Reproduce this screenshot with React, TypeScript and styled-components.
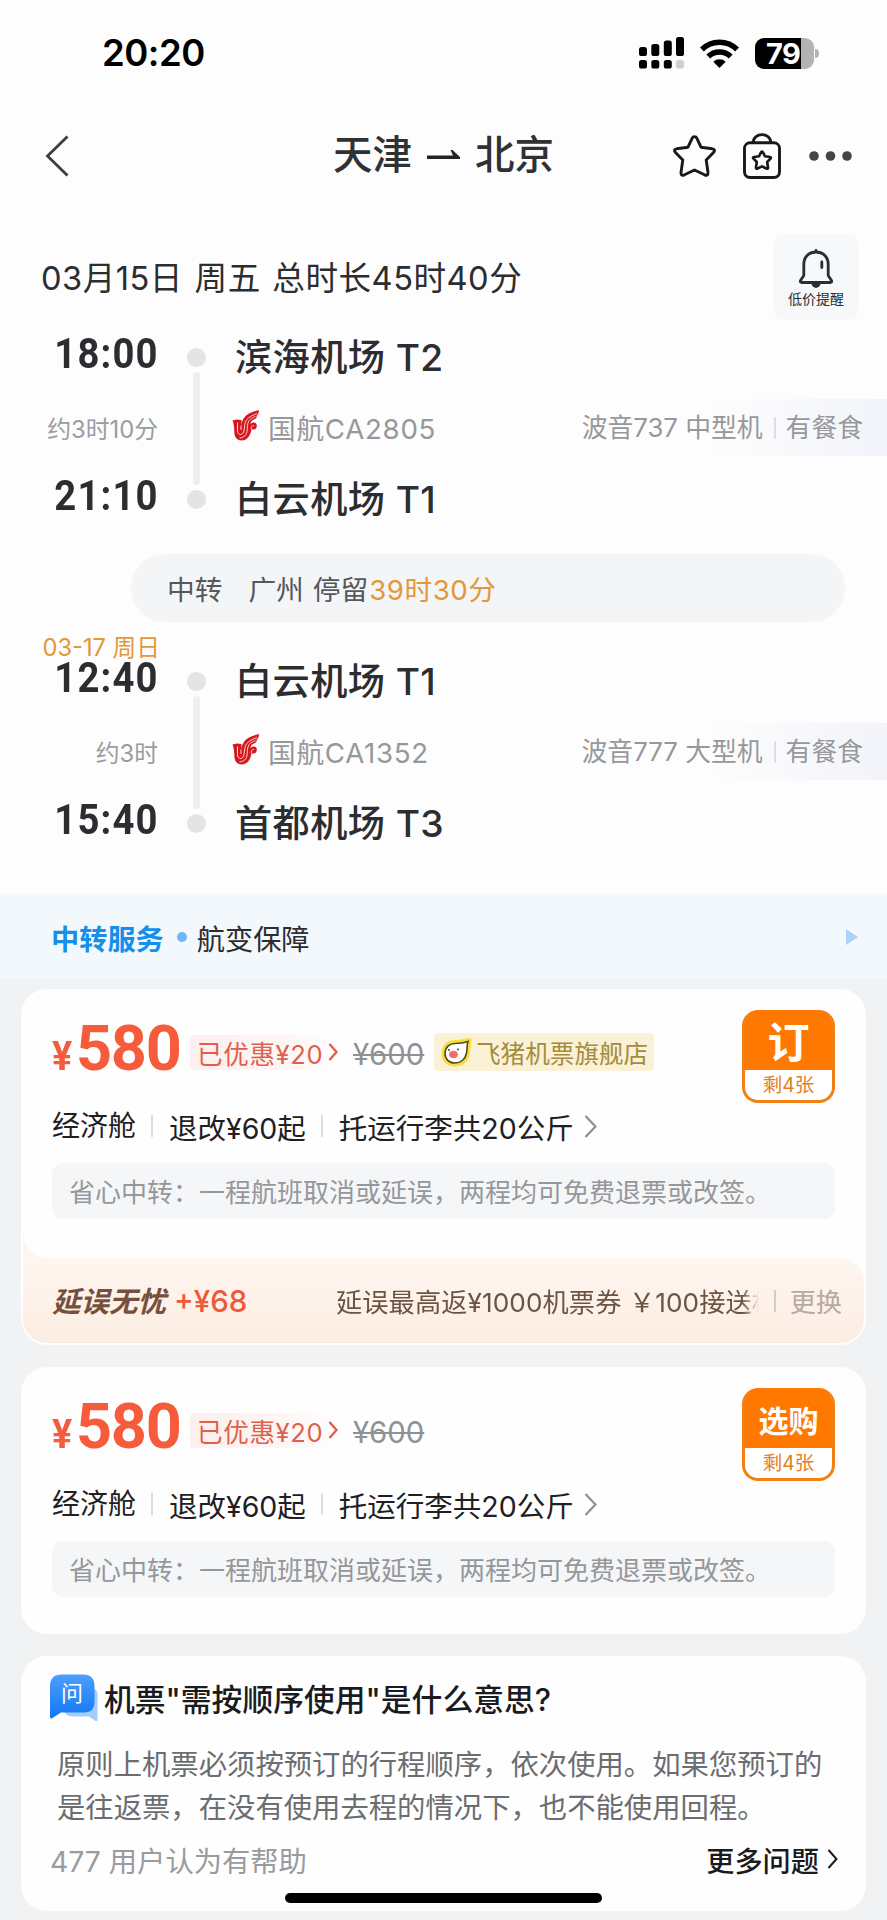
import React from 'react';
import styled, { createGlobalStyle } from 'styled-components';

const Global = createGlobalStyle`
  * { box-sizing: border-box; }
  body { margin: 0; background: #f0f2f4; }
`;

const Page = styled.div`
  position: relative;
  width: 887px;
  height: 1920px;
  overflow: hidden;
  background: #f0f2f4;
  font-family: Inter, 'Noto Sans CJK SC', sans-serif;
  color: #2b2d30;
  white-space: nowrap;
`;

const Sheet = styled.section`
  height: 894px;
  background: #fdfdfd;
`;

/* status bar */
const StatusBar = styled.div`
  height: 106px;
  padding: 0 68px 0 102px;
  display: flex;
  align-items: center;
  justify-content: space-between;
`;
const Clock = styled.span`
  font-size: 36.5px;
  font-weight: 600;
  letter-spacing: -0.5px;
  color: #000;
`;
const StatusIcons = styled.div`
  display: flex;
  align-items: center;
  gap: 16px;
`;

/* navigation */
const NavBar = styled.header`
  height: 98px;
  padding: 2px 35px 0 45px;
  display: grid;
  grid-template-columns: 1fr auto 1fr;
  align-items: center;
`;
const Title = styled.h1`
  margin: -2px 0 0 -10px;
  display: flex;
  align-items: center;
  gap: 15px;
  font-size: 39.5px;
  font-weight: 500;
  line-height: 50px;
  color: #303133;
`;
const NavActions = styled.div`
  margin-top: -1px;
  display: flex;
  justify-content: flex-end;
  align-items: center;
`;

/* itinerary */
const DateRow = styled.div`
  height: 85px;
  margin: 31px 28px 2px 41px;
  display: flex;
  align-items: center;
  justify-content: space-between;
`;
const DateText = styled.span`
  margin-top: -5px;
  font-size: 32.6px;
  letter-spacing: 0.5px;
  word-spacing: 2px;
`;
const AlertButton = styled.button`
  width: 86px;
  height: 85px;
  padding: 13px 0 0;
  border: 0;
  border-radius: 12px;
  background: #f6f8f9;
  display: flex;
  flex-direction: column;
  align-items: center;
  font: 14px/18px Inter, 'Noto Sans CJK SC', sans-serif;
  color: #2b2d30;
  white-space: nowrap;
`;
const Leg = styled.div`
  display: grid;
  grid-template-columns: 158px 76px 1fr;
  grid-template-rows: repeat(3, 71px);
`;
const TimeCell = styled.div<{ $row: number }>`
  grid-column: 1;
  grid-row: ${(p) => p.$row};
  display: flex;
  flex-direction: column;
  justify-content: flex-end;
  align-items: flex-end;
  padding-bottom: 20px;
`;
const Time = styled.span`
  margin-right: -1px;
  font-family: Roboto, sans-serif;
  font-weight: 700;
  font-size: 42px;
  line-height: 38px;
  letter-spacing: 1.3px;
  transform: scaleX(0.91);
  transform-origin: right;
`;
const DayLabel = styled.span`
  font-size: 23.7px;
  line-height: 24px;
  margin: 0 -2px -1px 0;
  color: #e2983a;
`;
const Duration = styled.div`
  grid-column: 1;
  grid-row: 2;
  align-self: center;
  justify-self: end;
  margin-top: -2px;
  font-size: 23.8px;
  color: #9a9c9f;
`;
const Track = styled.div`
  grid-column: 2;
  grid-row: 1 / span 3;
  padding: 26px 0;
  display: flex;
  flex-direction: column;
  align-items: center;
  gap: 5px;
`;
const Stop = styled.i`
  width: 19px;
  height: 19px;
  border-radius: 50%;
  background: #e2e4e5;
`;
const Rail = styled.i`
  flex: 1;
  width: 7px;
  border-radius: 3px;
  background: #eeeff0;
`;
const Airport = styled.div<{ $row: number }>`
  grid-column: 3;
  grid-row: ${(p) => p.$row};
  padding-left: 1px;
  line-height: 71px;
  font-size: 37.2px;
  font-weight: 500;
  letter-spacing: 0.4px;
`;
const FlightRow = styled.div`
  grid-column: 3;
  grid-row: 2;
  display: flex;
  align-items: center;
  justify-content: space-between;
  color: #96989b;
`;
const Flight = styled.div`
  margin: -3px 0 0 -2px;
  display: flex;
  align-items: center;
  gap: 8px;
  font-size: 27.7px;
  letter-spacing: 0.7px;
`;
const Aircraft = styled.div`
  height: 57px;
  width: 330px;
  padding: 2px 24px 0 0;
  margin-top: -3px;
  display: flex;
  align-items: center;
  justify-content: flex-end;
  font-size: 25.8px;
  line-height: 30px;
  background: linear-gradient(90deg, rgba(243, 245, 250, 0) 45%, #f2f4fa);
`;
const Bar = styled.i<{ $h?: number; $m?: string; $c?: string }>`
  width: 2px;
  height: ${(p) => p.$h ?? 22}px;
  margin: ${(p) => p.$m ?? '0 10px 0 11px'};
  background: ${(p) => p.$c ?? '#dcdee0'};
`;
const Transfer = styled.div`
  height: 68px;
  margin: 19px 42px 24px 131px;
  padding-left: 36px;
  border-radius: 34px;
  background: #f3f5f7;
  display: flex;
  align-items: center;
  font-size: 27.7px;
  color: #55585c;
`;
const TransferCity = styled.span`
  margin: 0 9px 0 26px;
`;
const Wait = styled.span`
  margin-left: 1px;
  letter-spacing: 0.5px;
  color: #e2983a;
`;

/* service band */
const Service = styled.div`
  height: 85px;
  padding: 1px 29px 0 51px;
  display: flex;
  align-items: center;
  font-size: 28.2px;
  background: #f3f8fc;
`;
const ServiceName = styled.b`
  font-weight: 600;
  color: #168fe8;
`;
const Dot = styled.i`
  width: 10px;
  height: 10px;
  margin: 0 10px 0 13px;
  border-radius: 50%;
  background: #74b4f5;
`;
const Arrow = styled.i`
  margin-left: auto;
  border: solid transparent;
  border-width: 8px 0 8px 12px;
  border-left-color: #abd2f8;
`;

/* cards */
const Cards = styled.main`
  padding: 10px 21px;
  display: flex;
  flex-direction: column;
  gap: 22px;
`;
const Card = styled.article<{ $h: number }>`
  height: ${(p) => p.$h}px;
  border-radius: 26px;
  background: #fefefe;
  overflow: hidden;
`;
const OfferBody = styled.div`
  height: 269px;
  padding: 21px 31px 0;
`;
const OfferHead = styled.div`
  height: 153px;
  display: flex;
  justify-content: space-between;
`;
const PriceRow = styled.div`
  height: 84px;
  display: flex;
  align-items: center;
`;
const Price = styled.div`
  width: 138px;
  margin-top: 1px;
  display: flex;
  align-items: baseline;
  font-family: Roboto, sans-serif;
  font-weight: 700;
  line-height: 66px;
  color: #f65b3b;
`;
const Yen = styled.span`
  width: 24px;
  font-size: 41px;
  transform: scaleX(0.92);
  transform-origin: left;
`;
const Amount = styled.span`
  font-size: 63px;
  letter-spacing: -1.3px;
`;
const Discount = styled.div`
  width: 150px;
  height: 35px;
  padding-left: 7px;
  display: flex;
  align-items: center;
  gap: 5px;
  border-radius: 4px;
  font-size: 25.6px;
  letter-spacing: 0.6px;
  color: #e0604c;
  background: linear-gradient(90deg, #fdefed, #fef7f6 70%, #fefefe);
`;
const OldPrice = styled.s`
  width: 81px;
  margin: 5px 0 0 13px;
  font-size: 29.3px;
  color: #8f9194;
`;
const Store = styled.div`
  height: 38px;
  width: 220px;
  padding-left: 7px;
  display: flex;
  align-items: center;
  gap: 4px;
  border-radius: 4px;
  font-size: 24.6px;
  color: #a38d3d;
  background: #fbf1d6;
`;
const CabinRow = styled.div`
  height: 64px;
  display: flex;
  align-items: center;
  font-size: 28px;
  color: #1e2023;
`;
const Cabin = styled.span`
  margin-top: -5px;
`;
const Terms = styled.span`
  font-size: 28.5px;
`;
const BuyButton = styled.button<{ $size: number }>`
  width: 93px;
  height: 93px;
  padding: 0;
  border: 3px solid #f47f12;
  border-top-color: #ff7800;
  border-radius: 16px;
  background: linear-gradient(#ff7800 57px, #fff 57px);
  text-align: center;
  color: #e2801f;
  font: 19.5px/29px Inter, 'Noto Sans CJK SC', sans-serif;

  b {
    display: block;
    height: 57px;
    color: #fff;
    font-weight: 600;
    font-size: ${(p) => p.$size}px;
    line-height: 58px;
  }
`;
const Note = styled.p`
  height: 56px;
  margin: 0;
  padding-left: 17px;
  border-radius: 11px;
  background: #f4f6f8;
  color: #95979a;
  font-size: 26px;
  line-height: 59px;
`;
const Insurance = styled.div`
  position: relative;
  height: 85px;
  margin: 0 2px;
  padding: 0 22px 0 29px;
  border-radius: 0 24px 24px 24px;
  display: flex;
  align-items: center;
  background: linear-gradient(#fff6f0, #fcede2);
  font-size: 26.2px;
  color: #6b5443;

  &::before {
    content: '';
    position: absolute;
    left: 0;
    top: -24px;
    width: 24px;
    height: 24px;
    background: radial-gradient(circle at 100% 0, transparent 23px, #fff6f0 24px);
  }
`;
const InsuranceName = styled.b`
  margin-top: -3px;
  font-weight: 700;
  font-style: italic;
  font-size: 28.5px;
  color: #77503d;
`;
const InsurancePrice = styled.span`
  width: 162px;
  margin: 1px 0 0 8px;
  font-size: 29.5px;
  font-weight: 500;
  color: #f0583c;
`;
const Benefit = styled.span`
  width: 423px;
  overflow: hidden;
  letter-spacing: 0.1px;
  mask-image: linear-gradient(90deg, #000 96%, transparent);
`;
const Change = styled.span`
  margin-left: auto;
  color: #b6aaa1;
`;

/* question card */
const Faq = styled.div`
  padding: 16px 28px 0 29px;
`;
const FaqHead = styled.h2`
  margin: 0;
  height: 50px;
  display: flex;
  align-items: center;
  gap: 6px;
  font-size: 30.8px;
  font-weight: 500;
  color: #191b1e;
`;
const Answer = styled.p`
  margin: 22px 0 0 7px;
  font-size: 28.35px;
  line-height: 43px;
  color: #6b6d70;
`;
const FaqFoot = styled.div`
  height: 50px;
  margin-top: 4px;
  display: flex;
  align-items: center;
  justify-content: space-between;
  font-size: 28.3px;
  color: #999b9e;
`;
const More = styled.span`
  display: flex;
  align-items: center;
  gap: 8px;
  font-size: 28.2px;
  font-weight: 500;
  color: #191b1e;
`;
const HomeIndicator = styled.div`
  position: absolute;
  left: 285px;
  bottom: 17px;
  width: 317px;
  height: 10px;
  border-radius: 5px;
  background: #000;
`;

const Chevron = ({ w, h, color, sw = 2 }: { w: number; h: number; color: string; sw?: number }) => (
  <svg width={w} height={h} viewBox={`0 0 ${w} ${h}`} fill="none" stroke={color} strokeWidth={sw}>
    <path d={`M1.5 1L${w - 1.5} ${h / 2}L1.5 ${h - 1}`} />
  </svg>
);

const Signal = () => (
  <svg width="45" height="32" viewBox="0 0 45 32">
    <rect x="0" y="10" width="8" height="9" rx="2.6" />
    <rect x="12.3" y="7" width="8" height="12" rx="2.6" />
    <rect x="24.8" y="3.5" width="8" height="15.5" rx="2.6" />
    <rect x="37" y="0" width="8" height="19" rx="2.6" />
    <rect x="0" y="23" width="8" height="8.5" rx="2.6" />
    <rect x="12.3" y="23" width="8" height="8.5" rx="2.6" />
    <rect x="24.8" y="23" width="8" height="8.5" rx="2.6" />
    <rect x="37" y="23" width="8" height="8.5" rx="2.6" fill="#d0d0d0" />
  </svg>
);

const Wifi = () => (
  <svg width="39" height="29" viewBox="0 0 39 29" fill="none" stroke="#000" strokeWidth="5.6">
    <path d="M1.9 10.5a25 25 0 0 1 35.2 0" />
    <path d="M8.3 17.6a16 16 0 0 1 22.4 0" />
    <path d="M19.5 29L13.3 22.8a9 9 0 0 1 12.4 0z" fill="#000" stroke="none" />
  </svg>
);

const BatteryBox = styled.div`
  display: flex;
  align-items: center;
  gap: 1px;
`;
const BatteryLevel = styled.div`
  width: 59px;
  height: 31px;
  border-radius: 9px;
  padding-left: 11px;
  background: linear-gradient(90deg, #000 46px, #b3b3b3 46px);
  color: #fff;
  font-size: 29px;
  font-weight: 700;
  line-height: 31px;
  letter-spacing: -0.6px;
`;
const BatteryCap = styled.i`
  width: 4px;
  height: 9px;
  border-radius: 0 5px 5px 0;
  background: #b3b3b3;
`;

const STAR =
  'M22 2.6Q23.6 2.6 24.3 4.2L28.5 13.2L39.8 14.8Q43.6 15.6 41 18.4L33.7 26L35.5 38.5Q35.7 42.3 32 40.8L22 36L12 40.8Q8.3 42.3 8.5 38.5L10.3 26L3 18.4Q.4 15.6 4.2 14.8L15.5 13.2L19.7 4.2Q20.4 2.6 22 2.6Z';

const StarIcon = () => (
  <svg width="45" height="44" viewBox="0 0 44 44" fill="none" stroke="#17191c" strokeWidth="2.9" strokeLinejoin="round">
    <path d={STAR} />
  </svg>
);

const BagIcon = styled.svg`
  margin: 0 28px 0 26px;
`;

const MoreDots = () => (
  <svg width="43" height="10" viewBox="0 0 43 10" fill="#444548">
    <circle cx="5" cy="5" r="4.8" />
    <circle cx="21.5" cy="5" r="4.8" />
    <circle cx="38" cy="5" r="4.8" />
  </svg>
);

const BellIcon = () => (
  <svg width="36" height="42" viewBox="0 0 36 42" fill="none" stroke="#2b2d30" strokeWidth="2.8" strokeLinejoin="round" strokeLinecap="round">
    <path d="M18 2.5V4M18 4C10.500 4 5.800 9 5.800 16.500V27.500L2.500 32.500Q1.800 34.500 3.800 34.500H32.200Q34.200 34.500 33.500 32.500L30.200 27.500V16.500C30.200 9 25.500 4 18 4Z" />
    <path d="M23.800 14V19.500" />
    <path d="M15 36.500H21Q20 38.600 18 38.600T15 36.500Z" fill="#2b2d30" />
  </svg>
);

const AirlineMark = styled.svg`
  margin-top: -5px;
`;

const AirChinaLogo = () => (
  <AirlineMark width="28" height="32" viewBox="0 0 28 32" fill="none">
    <path
      d="M.5 11.500L5 10.500L9.500 11V17.500C10 10 12 5 27 1C26.800 4.500 25.800 6 24.300 7C25.300 7.500 24.500 9.300 23 10C19.500 11 18.500 13 18.500 15.500C20 12.500 25.300 13 24.800 17.200C24.500 20.500 21.500 21 19.500 20.300C18.500 27 15 31.500 9.500 31.500C4.500 31.500 2.600 27.500 2.400 24C2.200 19 2 15 .5 11.500Z"
      fill="#d3191f"
    />
    <g stroke="#fbe3e2" strokeWidth=".9">
      <path d="M5.500 13.500V21.500C5.500 26 9.800 27 11.600 23C13 19.500 12 14 14.500 10.800C17 7.800 21 6 25 4.600" />
      <path d="M7.500 29C14 28.300 15.200 24 15.300 19C15.400 12.500 17.500 9.500 23.500 7.600" />
      <path d="M9 16.500V21" />
      <path d="M19.200 20.300C19.200 17 20.500 16 22 16.800" />
    </g>
  </AirlineMark>
);

const FliggyLogo = () => (
  <svg width="31" height="29" viewBox="0 0 31 29">
    <path d="M3 15.500C3 8.500 8 4.500 14 4.500C19 4.500 23 4 28 2.500C27 6 27.500 10 26.500 15C25.300 22 20.500 26 14 26C7.500 26 3 22 3 15.500Z" fill="#fff" stroke="#f4df3c" strokeWidth="5" strokeLinejoin="round" />
    <path d="M4 15.500C4 9 8.500 5.500 14 5.500C19 5.500 23 5 27 3.500C25.500 8 26.500 10 25.500 15C24.500 21 20 25 14 25C8 25 4 21 4 15.500Z" fill="#fff" stroke="#544a22" strokeWidth="1.600" />
    <ellipse cx="12.500" cy="16.500" rx="4.500" ry="3.800" fill="#ee6f6c" />
    <circle cx="8" cy="12" r="1" fill="#4a4330" />
    <circle cx="17" cy="11.500" r="1" fill="#4a4330" />
  </svg>
);

const AskBox = styled.span`
  position: relative;
  width: 48px;
  height: 48px;

  span {
    position: absolute;
    left: 11px;
    top: 8px;
    font-size: 22px;
    line-height: 24px;
    font-weight: 400;
    color: #fff;
  }
`;

const AskIcon = () => (
  <AskBox>
    <svg width="48" height="48" viewBox="0 0 48 48">
      <defs>
        <linearGradient id="ask" x1="0" y1="0" x2="0" y2="1">
          <stop offset="0" stopColor="#4d9ffc" />
          <stop offset="1" stopColor="#1278f5" />
        </linearGradient>
      </defs>
      <path d="M14 14H40Q47.500 15 47.500 22V47Q47.500 49 45.500 48L39 43.500H22Q14 43.500 14 35Z" fill="#a3cdfb" />
      <path d="M12 1.500H33Q44.500 1.500 44.500 13V28.500Q44.500 39.500 34 39.500H11L2.500 45Q0 46.500 0 43.500V13Q0 1.500 12 1.500Z" fill="url(#ask)" />
    </svg>
    <span>问</span>
  </AskBox>
);

type LegData = {
  day?: string;
  depart: string;
  arrive: string;
  from: string;
  to: string;
  duration: string;
  flight: string;
  plane: string;
};

const FlightLeg = ({ leg }: { leg: LegData }) => (
  <Leg>
    <TimeCell $row={1}>
      {leg.day && <DayLabel>{leg.day}</DayLabel>}
      <Time>{leg.depart}</Time>
    </TimeCell>
    <Duration>{leg.duration}</Duration>
    <TimeCell $row={3}>
      <Time>{leg.arrive}</Time>
    </TimeCell>
    <Track>
      <Stop />
      <Rail />
      <Stop />
    </Track>
    <Airport $row={1}>{leg.from}</Airport>
    <FlightRow>
      <Flight>
        <AirChinaLogo />
        {leg.flight}
      </Flight>
      <Aircraft>
        {leg.plane}
        <Bar />
        有餐食
      </Aircraft>
    </FlightRow>
    <Airport $row={3}>{leg.to}</Airport>
  </Leg>
);

const Offer = ({ action, size, store }: { action: string; size: number; store?: string }) => (
  <OfferBody>
    <OfferHead>
      <div>
        <PriceRow>
          <Price>
            <Yen>¥</Yen>
            <Amount>580</Amount>
          </Price>
          <Discount>
            已优惠¥20
            <Chevron w={10} h={18} color="#e0604c" sw={2.4} />
          </Discount>
          <OldPrice>¥600</OldPrice>
          {store && (
            <Store>
              <FliggyLogo />
              {store}
            </Store>
          )}
        </PriceRow>
        <CabinRow>
          <Cabin>经济舱</Cabin>
          <Bar $m="0 16px 0 15px" />
          <Terms>退改¥60起</Terms>
          <Bar $m="0 16px 0 15px" />
          <Terms>托运行李共20公斤</Terms>
          <Bar $m="0 8px 0 0" $c="transparent" />
          <Chevron w={13} h={23} color="#8f9194" sw={2.3} />
        </CabinRow>
      </div>
      <BuyButton $size={size}>
        <b>{action}</b>
        剩4张
      </BuyButton>
    </OfferHead>
    <Note>省心中转：一程航班取消或延误，两程均可免费退票或改签。</Note>
  </OfferBody>
);

const first: LegData = {
  depart: '18:00',
  arrive: '21:10',
  from: '滨海机场 T2',
  to: '白云机场 T1',
  duration: '约3时10分',
  flight: '国航CA2805',
  plane: '波音737 中型机',
};
const second: LegData = {
  day: '03-17 周日',
  depart: '12:40',
  arrive: '15:40',
  from: '白云机场 T1',
  to: '首都机场 T3',
  duration: '约3时',
  flight: '国航CA1352',
  plane: '波音777 大型机',
};

export default function App() {
  return (
    <Page>
      <Global />
      <Sheet>
        <StatusBar>
          <Clock>20:20</Clock>
          <StatusIcons>
            <Signal />
            <Wifi />
            <BatteryBox>
              <BatteryLevel>79</BatteryLevel>
              <BatteryCap />
            </BatteryBox>
          </StatusIcons>
        </StatusBar>
        <NavBar>
          <svg width="24" height="42" viewBox="0 0 24 42" fill="none" stroke="#3c3d40" strokeWidth="2.8">
            <path d="M22.500 1.500L2.500 21L22.500 40.500" />
          </svg>
          <Title>
            天津
            <svg width="33" height="10" viewBox="0 0 33 10" fill="#222326">
              <path d="M0 5.600H26L23.500 0H25.500L33 7V9H0Z" />
            </svg>
            北京
          </Title>
          <NavActions>
            <StarIcon />
            <BagIcon width="38" height="46" viewBox="0 0 38 46" fill="none" stroke="#17191c" strokeWidth="2.9" strokeLinejoin="round">
              <rect x="1.500" y="9.800" width="35" height="34.700" rx="5.500" />
              <path d="M10.300 9.500C10.300 -1 27.700 -1 27.700 9.500" />
              <path d={STAR} transform="translate(9.200 17.400) scale(.445)" strokeWidth="6" />
            </BagIcon>
            <MoreDots />
          </NavActions>
        </NavBar>
        <DateRow>
          <DateText>03月15日 周五 总时长45时40分</DateText>
          <AlertButton>
            <BellIcon />
            低价提醒
          </AlertButton>
        </DateRow>
        <FlightLeg leg={first} />
        <Transfer>
          中转
          <TransferCity>广州</TransferCity>
          停留<Wait>39时30分</Wait>
        </Transfer>
        <FlightLeg leg={second} />
      </Sheet>
      <Service>
        <ServiceName>中转服务</ServiceName>
        <Dot />
        航变保障
        <Arrow />
      </Service>
      <Cards>
        <Card $h={356}>
          <Offer action="订" size={42} store="飞猪机票旗舰店" />
          <Insurance>
            <InsuranceName>延误无忧</InsuranceName>
            <InsurancePrice>+¥68</InsurancePrice>
            <Benefit>延误最高返¥1000机票券 ￥100接送机</Benefit>
            <Bar $m="0 0 0 15px" $c="#d8cbc1" />
            <Change>更换</Change>
          </Insurance>
        </Card>
        <Card $h={267}>
          <Offer action="选购" size={30} />
        </Card>
        <Card $h={255}>
          <Faq>
            <FaqHead>
              <AskIcon />
              机票"需按顺序使用"是什么意思?
            </FaqHead>
            <Answer>
              原则上机票必须按预订的行程顺序，依次使用。如果您预订的
              <br />
              是往返票，在没有使用去程的情况下，也不能使用回程。
            </Answer>
            <FaqFoot>
              477 用户认为有帮助
              <More>
                更多问题
                <Chevron w={11} h={20} color="#191b1e" />
              </More>
            </FaqFoot>
          </Faq>
        </Card>
      </Cards>
      <HomeIndicator />
    </Page>
  );
}
